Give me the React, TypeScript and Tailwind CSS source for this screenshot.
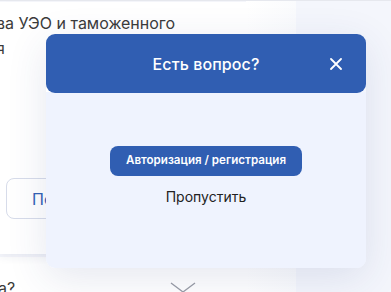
import React from "react";

export default function App() {
  return (
    <div className="relative w-[391px] h-[292px] overflow-hidden bg-[#f6f7fc]" style={{ fontFamily: "Inter, 'Noto Sans', sans-serif" }}>
      <div className="h-px bg-[#e6e8ee]" />
      <div className="flex h-[291px]">
        <div className="w-[246px] flex flex-col overflow-hidden">
          <div className="bg-white h-[252px] mt-px shadow-[0_4px_8px_rgba(40,50,90,0.06)] relative">
            <div className="pt-[9px] -ml-[4px] text-[16px] leading-[25px] text-[#3b3b3b] whitespace-nowrap">
              <div>ва УЭО и таможенного</div>
              <div>я</div>
            </div>
            <div className="mt-[117px] ml-[6px] w-[150px] h-[41px] rounded-[8px] border border-[#d7dcea] flex items-center pl-[25px] text-[16px] text-[#3462b4]">
              Перейти
            </div>
          </div>
          <div className="bg-white flex-1 mt-[3px] flex items-end justify-between pr-[50px]">
            <div className="-ml-[2px] text-[16px] leading-[20px] text-[#3b3b3b] translate-y-[6px]">а?</div>
            <svg width="26" height="12" viewBox="0 0 26 12" className="translate-y-[2px]">
              <path d="M1 1 L13 10 L25 1" fill="none" stroke="#9a9da6" strokeWidth="1.3" />
            </svg>
          </div>
        </div>
        <div className="w-[50px] bg-gradient-to-r from-white to-[#fafbfd]" />
        <div className="flex-1 bg-[#f4f6fc]" />
      </div>

      <div className="absolute left-[46px] top-[34px] w-[320px] rounded-[9px] shadow-[0_10px_40px_rgba(40,60,120,0.12)]">
        <div className="h-[59px] bg-[#305eb2] rounded-[9px] relative flex items-center justify-center">
          <span className="text-white text-[16px] font-medium tracking-[0.1px]">Есть вопрос?</span>
          <svg className="absolute right-[24px] top-[24px]" width="12" height="12" viewBox="0 0 12 12">
            <path d="M1 1 L11 11 M11 1 L1 11" stroke="white" strokeWidth="1.8" strokeLinecap="round" />
          </svg>
        </div>
        <div className="h-[176px] bg-[#eff3fe] rounded-b-[9px] flex flex-col items-center pt-[54px] -mt-px">
          <div className="w-[192px] h-[30px] rounded-[8px] bg-[#305eb2] flex items-center justify-center text-white text-[11.6px] font-semibold">
            Авторизация / регистрация
          </div>
          <div className="mt-[12px] text-[14px] text-[#222] leading-[18px]">Пропустить</div>
        </div>
      </div>
    </div>
  );
}
